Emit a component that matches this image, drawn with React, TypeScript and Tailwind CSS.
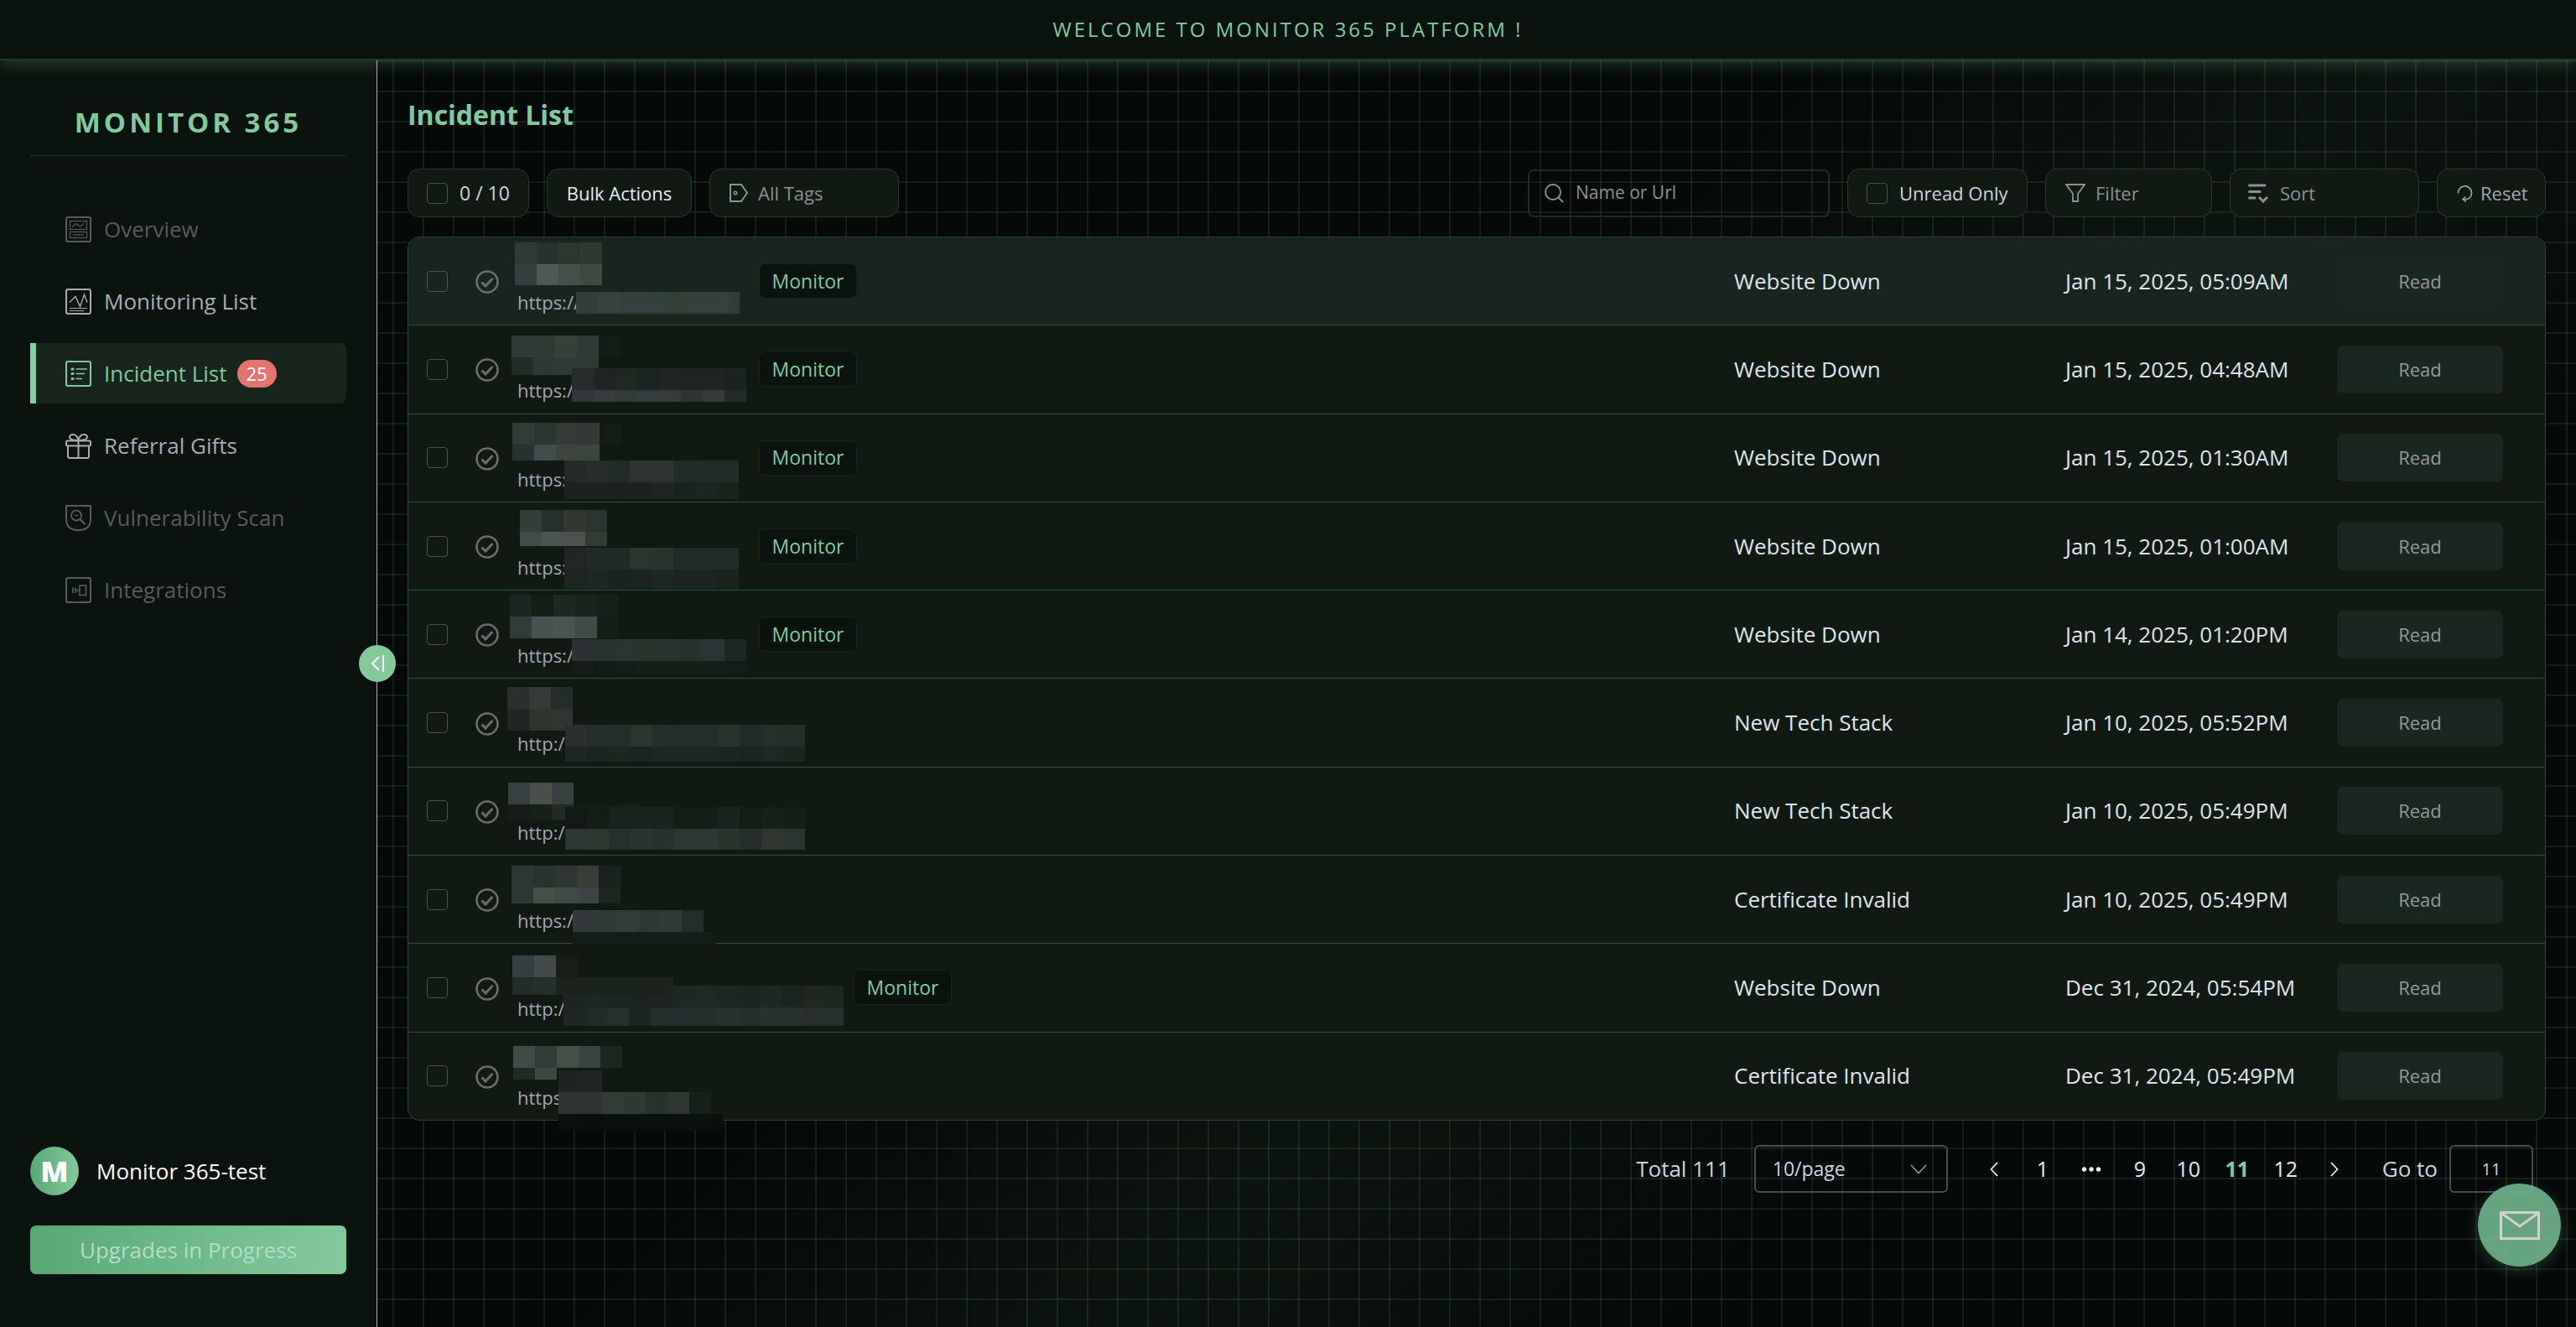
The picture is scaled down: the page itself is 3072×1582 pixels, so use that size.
import React from "react";

type Strip = { h: number; cells: string[]; w?: number };
type Mosaic = { x: number; y: number; strips: Strip[] };
type Incident = {
  url: string;
  width: number;
  tag?: string;
  status: string;
  date: string;
  mosaics: Mosaic[];
};

const incidents: Incident[] = [
  {
    url: "https://", width: 288, tag: "Monitor", status: "Website Down", date: "Jan 15, 2025, 05:09AM",
    mosaics: [
      { x: -3, y: 6, strips: [
        { h: 26, cells: ["#2e3a33", "#24332b", "#2b3830", "#2d3a32"] },
        { h: 25, cells: ["#333f41", "#4d5a54", "#444f4a", "#404840"] } ] },
      { x: 70, y: 65, strips: [
        { h: 26, w: 195, cells: ["#323e3a", "#35423e", "#33403e", "#33413e", "#343f38", "#33403b", "#33403d", "#303c35"] } ] },
    ],
  },
  {
    url: "https:/", width: 288, tag: "Monitor", status: "Website Down", date: "Jan 15, 2025, 04:48AM",
    mosaics: [
      { x: -7, y: 12, strips: [
        { h: 26, cells: ["#323a37", "#323a35", "#373f39", "#303936", "#131c15"] },
        { h: 21, cells: ["#232b29", "#303836", "#313936", "#313936"] } ] },
      { x: 65, y: 51, strips: [
        { h: 26, cells: ["#252d2a", "#1e2522", "#202824", "#1c2421", "#202723", "#1e2522", "#1e2522", "#1b2320"] },
        { h: 14, cells: ["#303939", "#353e3e", "#313b38", "#343d3c", "#343d3c", "#2c3530", "#343d3a", "#222b27"] } ] },
    ],
  },
  {
    url: "https:", width: 288, tag: "Monitor", status: "Website Down", date: "Jan 15, 2025, 01:30AM",
    mosaics: [
      { x: -6, y: 10, strips: [
        { h: 26, cells: ["#333b39", "#2c3530", "#343b36", "#323937", "#131c15"] },
        { h: 19, cells: ["#283031", "#444b4b", "#3d453f", "#3d453f"] } ] },
      { x: 56, y: 55, strips: [
        { h: 26, cells: ["#232a28", "#262d2a", "#242c29", "#2d3430", "#2c3330", "#232b28", "#242c29", "#242c29"] },
        { h: 20, cells: ["#1b2320", "#1b2320", "#1a211e", "#1b2320", "#1e2623", "#1b2320", "#1d2522", "#1a221c"] } ] },
    ],
  },
  {
    url: "https:", width: 288, tag: "Monitor", status: "Website Down", date: "Jan 15, 2025, 01:00AM",
    mosaics: [
      { x: 3, y: 9, strips: [
        { h: 26, cells: ["#353d38", "#272f2b", "#303830", "#2c342f"] },
        { h: 17, cells: ["#424b4a", "#4a534f", "#4a534f", "#323b35"] } ] },
      { x: 56, y: 54, strips: [
        { h: 26, cells: ["#202725", "#222a27", "#222a27", "#2c3430", "#2b332f", "#232b28", "#232b28", "#232b28"] },
        { h: 23, cells: ["#1e2623", "#1f2724", "#1b2320", "#1c2421", "#1f2724", "#1d2522", "#1d2522", "#1b231e"] } ] },
    ],
  },
  {
    url: "https:/", width: 288, tag: "Monitor", status: "Website Down", date: "Jan 14, 2025, 01:20PM",
    mosaics: [
      { x: -9, y: 5, strips: [
        { h: 26, cells: ["#1d2522", "#141d16", "#1e2720", "#1a221e", "#161f18"] },
        { h: 26, cells: ["#323a3a", "#495250", "#4b5450", "#424b48", "#151e17"] } ] },
      { x: 65, y: 58, strips: [
        { h: 26, cells: ["#2b3332", "#2a3230", "#2c3432", "#2b332e", "#2b332e", "#29312d", "#2b3333", "#1f2724"] },
        { h: 15, cells: ["#151c19", "#131b18", "#141c18", "#161e18", "#161e18", "#161e18", "#151d17", "#141c19"] } ] },
    ],
  },
  {
    url: "http:/", width: 288, status: "New Tech Stack", date: "Jan 10, 2025, 05:52PM",
    mosaics: [
      { x: -12, y: 10, strips: [
        { h: 26, cells: ["#29302f", "#343b37", "#252d29"] },
        { h: 26, cells: ["#1e2523", "#2c342c", "#2f3632"] } ] },
      { x: 57, y: 55, strips: [
        { h: 26, cells: ["#29312f", "#262e2b", "#252d2a", "#2d3531", "#262e2b", "#252d2a", "#252d2a", "#2a322d", "#232b28", "#272f2b", "#262e2a"] },
        { h: 18, cells: ["#1e2623", "#1c2421", "#1e2622", "#1c2421", "#1e2623", "#1e2623", "#1e2623", "#1d2522", "#1c2421", "#1f2724", "#1d2521"] } ] },
    ],
  },
  {
    url: "http:/", width: 288, status: "New Tech Stack", date: "Jan 10, 2025, 05:49PM",
    mosaics: [
      { x: -11, y: 18, strips: [
        { h: 26, cells: ["#394140", "#485049", "#394140"] },
        { h: 19, cells: ["#151d16", "#18201a", "#222a25", "#131b16", "#151d16", "#18201c"] } ] },
      { x: 57, y: 47, strips: [
        { h: 26, cells: ["#121a15", "#141c16", "#1a221e", "#1b231f", "#1b231f", "#151d17", "#151d18", "#1b231f", "#151d17", "#171f19", "#161e18"] },
        { h: 25, cells: ["#2e3634", "#2f3733", "#272f2c", "#2b332e", "#29312d", "#2f3735", "#2f3735", "#2b332f", "#262e29", "#2f3730", "#2c342f"] } ] },
    ],
  },
  {
    url: "https:/", width: 288, status: "Certificate Invalid", date: "Jan 10, 2025, 05:49PM",
    mosaics: [
      { x: -7, y: 12, strips: [
        { h: 26, cells: ["#2f3736", "#2a322e", "#2f3736", "#383d37", "#1a221f"] },
        { h: 19, cells: ["#2f3736", "#464e48", "#424a48", "#3c4444", "#1d261f"] } ] },
      { x: 66, y: 65, strips: [
        { h: 26, cells: ["#323a39", "#323a36", "#333b37", "#303835", "#323a36", "#252d29"] },
        { h: 15, w: 170, cells: ["#141d17"] } ] },
    ],
  },
  {
    url: "http:/", width: 401, tag: "Monitor", status: "Website Down", date: "Dec 31, 2024, 05:54PM",
    mosaics: [
      { x: 55, y: 50, strips: [
        { h: 26, w: 334, cells: ["#1d2522", "#1f2724", "#1d2522", "#1c2421", "#1d2522", "#1f2723", "#202823", "#1f2723", "#1d2521", "#1f2722", "#1c241f", "#1f2720", "#1e2620"] },
        { h: 22, w: 334, cells: ["#1f2724", "#222a27", "#272f2c", "#1d2522", "#252d2a", "#262e2d", "#252d2b", "#29312e", "#262e2b", "#29312e", "#29312e", "#282f2b", "#272f2b"] } ] },
      { x: -6, y: 14, strips: [
        { h: 26, cells: ["#353f3f", "#424a4a", "#191e18"] },
        { h: 21, w: 192, cells: ["#242c28", "#262e2a", "#1b231c", "#1a221d", "#1a221c", "#1a221c", "#1b231c", "#1c241e"] } ] },
    ],
  },
  {
    url: "https", width: 288, status: "Certificate Invalid", date: "Dec 31, 2024, 05:49PM",
    mosaics: [
      { x: -5, y: 16, strips: [
        { h: 26, cells: ["#424a47", "#343c3a", "#464e48", "#3a4242", "#1e2620"] },
        { h: 14, cells: ["#222a26", "#404843"] } ] },
      { x: 49, y: 45, strips: [
        { h: 26, cells: ["#1e2521", "#1f2622"] },
        { h: 26, cells: ["#2d3431", "#2e3531", "#333b37", "#303834", "#29312d", "#2f3733", "#161f1a"] },
        { h: 20, w: 196, cells: ["#0a100d", "#0a0f0c", "#09110d", "#09110d", "#09110d", "#0a100c", "#0a120e", "#0a0f0c"] } ] },
    ],
  },
];

function MosaicBlock({ x, y, strips }: Mosaic) {
  return (
    <div aria-hidden="true" className="absolute z-10" style={{ left: x, top: y }}>
      {strips.map((s, i) => (
        <div key={i} className="flex overflow-hidden" style={{ height: s.h, width: s.w ?? s.cells.length * 26 }}>
          {s.cells.map((c, j) => (
            <span key={j} className={s.cells.length === 1 ? "w-full" : "w-[26px] shrink-0"} style={{ background: c }} />
          ))}
        </div>
      ))}
    </div>
  );
}

const OverviewIcon = () => (
  <>
    <rect x="1" y="1" width="29" height="29" rx="2" strokeWidth="2" />
    <rect x="5.5" y="5.5" width="20" height="10" strokeWidth="1.2" />
    <path d="M8 12.5L12.5 8.500L17.5 12L22 8.500" strokeWidth="1.2" />
    <rect x="5.5" y="18.5" width="20" height="7" strokeWidth="1.2" />
    <path d="M9 22H22" strokeWidth="1.2" />
  </>
);
const MonitoringIcon = () => (
  <>
    <rect x="1" y="1" width="29" height="29" rx="2" strokeWidth="2" />
    <path d="M5 16.5L12 9.5L17.5 21.5L22.5 7L26 16.5" strokeWidth="1.4" />
    <path d="M5 23.5H26M5 26.5H22" strokeWidth="1.2" />
  </>
);
const IncidentIcon = () => (
  <>
    <rect x="1" y="1" width="29" height="29" rx="2" strokeWidth="2" />
    <path d="M12.5 10H26M12.5 15.5H23M12.5 21.5H20" strokeWidth="1.3" />
    <path d="M8 10H9M8 15.5H9M8 21.5H9" strokeWidth="3.2" strokeLinecap="round" />
  </>
);
const GiftIcon = () => (
  <>
    <rect x="1" y="9.5" width="29" height="6" rx="1.5" strokeWidth="2" />
    <path d="M3 15.5V28Q3 30 5 30H26Q28 30 28 28V15.5M15.5 9.5V30" strokeWidth="2" />
    <path d="M15.5 9C10 9 5 8.500 5 5C5 1 13.5 -0.5 15.5 9C17.5 -0.5 26 1 26 5C26 8.500 21 9 15.5 9Z" strokeWidth="2" />
  </>
);
const ScanIcon = () => (
  <>
    <path d="M1 1H30V17Q30 30 15.5 30Q1 30 1 17Z" strokeWidth="2" />
    <circle cx="13" cy="12.5" r="6" strokeWidth="1.8" />
    <path d="M10.5 12.5H15.5" strokeWidth="1.3" />
    <path d="M17.5 17L23.5 23" strokeWidth="2.4" />
  </>
);
const IntegrationIcon = () => (
  <>
    <rect x="1" y="1" width="29" height="29" rx="2" strokeWidth="2" />
    <path d="M9 12.5V19M12 12.5V19M12.5 15.7H17" strokeWidth="1.6" />
    <rect x="17" y="10" width="7.5" height="11.5" strokeWidth="1.6" />
  </>
);

const menu = [
  { label: "Overview", icon: OverviewIcon, tone: "text-[#585c5b]" },
  { label: "Monitoring List", icon: MonitoringIcon, tone: "text-[#a9acb0]" },
  { label: "Incident List", icon: IncidentIcon, tone: "text-[#7fc99a]", badge: 25 },
  { label: "Referral Gifts", icon: GiftIcon, tone: "text-[#a9acb0]" },
  { label: "Vulnerability Scan", icon: ScanIcon, tone: "text-[#585c5b]" },
  { label: "Integrations", icon: IntegrationIcon, tone: "text-[#585c5b]" },
];

function Sidebar() {
  return (
    <aside className="relative flex w-[450px] shrink-0 flex-col border-r border-[#7fc99a] bg-[#0b130f] px-9 pb-[63px]">
      <div className="border-b border-[#1e3327] pt-[49px] pb-[15px] text-center">
        <span className="block text-[33px] leading-[49px] font-bold tracking-[4px] text-[#82ca9c]">MONITOR 365</span>
      </div>
      <nav className="mt-[51px] flex flex-col gap-[14px]">
        {menu.map(({ label, icon: Icon, tone, badge }) => (
          <a
            key={label}
            href="#"
            aria-current={badge ? "page" : undefined}
            className={`flex h-[72px] items-center text-[26px] ${tone} ${
              badge ? "rounded-r-[7px] border-l-[7px] border-[#85cfa0] bg-[#18251d] pl-[35px]" : "pl-[42px]"
            }`}
          >
            <svg viewBox="0 0 31 31" className="mr-[15px] h-[31px] w-[31px] shrink-0" fill="none" stroke="currentColor">
              <Icon />
            </svg>
            {label}
            {badge && (
              <span className="ml-3 flex h-[33px] w-[47px] items-center justify-center rounded-full bg-[#e57470] text-[22px] text-white">
                {badge}
              </span>
            )}
          </a>
        ))}
      </nav>
      <div className="mt-auto flex items-center">
        <span className="flex h-[58px] w-[58px] items-center justify-center rounded-full bg-linear-to-r from-[#5aa876] to-[#82ca9c] text-[34px] font-extrabold text-white">
          M
        </span>
        <span className="ml-[21px] text-[26px] font-medium text-white">Monitor 365-test</span>
      </div>
      <button
        type="button"
        className="mt-9 h-[58px] rounded-[7px] bg-linear-to-r from-[#5aa876] to-[#82ca9c] text-[26px] text-[#b4dec4]"
      >
        Upgrades in Progress
      </button>
      <button
        type="button"
        aria-label="Collapse sidebar"
        className="absolute top-[697px] -right-[23px] z-20 flex h-11 w-11 items-center justify-center rounded-full bg-[#82ca9c] text-white"
      >
        <svg viewBox="0 0 20 24" className="h-6 w-5" fill="none" stroke="currentColor" strokeWidth="2">
          <path d="M12 4L4 12L12 20M17 2V22" />
        </svg>
      </button>
    </aside>
  );
}

const pill = "flex h-[58px] items-center rounded-[14px] border border-[#233b2d] bg-[#101a13]";
const box = "h-[25px] w-[25px] shrink-0 appearance-none rounded-[4px] border border-[#4c4f4e] bg-transparent";

function Toolbar() {
  return (
    <div className="mt-[40px] flex items-center gap-[21px]">
      <label className={`${pill} w-[145px] pl-[22px] text-[23px] text-[#cfd3dc]`}>
        <input type="checkbox" className={`${box} mr-[14px]`} />0 / 10
      </label>
      <button type="button" className={`${pill} w-[173px] justify-center text-[22px] font-medium text-[#e5eaf3]`}>
        Bulk Actions
      </button>
      <label className={`${pill} w-[226px] pl-[23px] text-[#8d9095]`}>
        <svg viewBox="0 0 22 22" className="mr-3 h-[22px] w-[22px] shrink-0" fill="none" stroke="currentColor" strokeWidth="2">
          <path d="M1 1H14L21 11L14 21H1Z" />
          <circle cx="7" cy="11" r="1.8" strokeWidth="1.5" />
        </svg>
        <select aria-label="Tags" className="min-w-0 flex-1 appearance-none bg-transparent text-[22px]">
          <option>All Tags</option>
        </select>
      </label>
      <label className="ml-auto flex h-[57px] w-[360px] items-center rounded-[7px] border-2 border-[#1c2f25] pl-[18px] text-[#8d9095]">
        <svg viewBox="0 0 23 23" className="mr-[14px] h-[23px] w-[23px] shrink-0" fill="none" stroke="currentColor" strokeWidth="1.8">
          <circle cx="10" cy="10" r="9" />
          <path d="M16.5 16.5L22 22" />
        </svg>
        <input
          type="text"
          aria-label="Name or Url"
          placeholder="Name or Url"
          className="min-w-0 flex-1 bg-transparent text-[21px] placeholder:text-[#8d9095]"
        />
      </label>
      <label className={`${pill} w-[215px] pl-[22px] text-[22px] font-medium text-[#cfd3dc]`}>
        <input type="checkbox" className={`${box} mr-[14px]`} />
        Unread Only
      </label>
      <label className={`${pill} w-[199px] pl-[23px] text-[#8d9095]`}>
        <svg viewBox="0 0 24 22" className="mr-3 h-[22px] w-6 shrink-0" fill="none" stroke="currentColor" strokeWidth="1.8">
          <path d="M1 1H23L15 12V21H9V12Z" />
        </svg>
        <select aria-label="Filter" className="min-w-0 flex-1 appearance-none bg-transparent text-[22px]">
          <option>Filter</option>
        </select>
      </label>
      <label className={`${pill} w-[226px] pl-[21px] text-[#8d9095]`}>
        <svg viewBox="0 0 24 24" className="mr-[14px] h-6 w-6 shrink-0" fill="none" stroke="currentColor" strokeWidth="3">
          <path d="M1.5 3H20M1.5 10.5H14M1.5 18H8" strokeLinecap="round" />
          <path d="M13 17L18 22L23 17" />
        </svg>
        <select aria-label="Sort" className="min-w-0 flex-1 appearance-none bg-transparent text-[22px]">
          <option>Sort</option>
        </select>
      </label>
      <button type="button" className={`${pill} w-[130px] pl-[23px] text-[22px] text-[#a3a6ad]`}>
        <svg viewBox="0 0 19 21" className="mr-[9px] h-[21px] w-[19px] shrink-0" fill="none" stroke="currentColor" strokeWidth="1.6">
          <path d="M1.500 10.500A8 8 0 1 1 12 17.500L7.500 17.500M10.500 14.500L7 17.500L11 20.500" />
        </svg>
        Reset
      </button>
    </div>
  );
}

function IncidentTable() {
  return (
    <div className="mt-[23px] rounded-[14px] border border-[#2b4637] bg-[#101a13]">
      <table className="h-[1052px] w-full table-fixed border-separate border-spacing-0 text-left">
        <colgroup>
          <col className="w-[72px]" />
          <col className="w-[58px]" />
          <col />
          <col className="w-[395px]" />
          <col className="w-[324px]" />
          <col className="w-[248px]" />
        </colgroup>
        <tbody>
          {incidents.map((it, i) => {
            const line = i < incidents.length - 1 ? "border-b border-[#2f503d]" : "";
            const first = i === 0;
            const tint = first ? "bg-[#18251f]" : "";
            return (
              <tr key={i}>
                <td className={`pl-[22px] align-middle ${line} ${tint} ${first ? "rounded-tl-[13px]" : ""}`}>
                  <input type="checkbox" aria-label={`Select incident ${i + 1}`} className={`${box} block`} />
                </td>
                <td className={`pl-2 align-middle ${line} ${tint}`}>
                  <svg viewBox="0 0 28 28" className="mt-[2px] block h-7 w-7" fill="none" stroke="#6c6e6d" strokeWidth="2.6">
                    <circle cx="14" cy="14" r="12.5" />
                    <path d="M7.5 14.5L12 19L20.5 10" strokeWidth="3" />
                  </svg>
                </td>
                <td className={`relative p-0 align-top ${line} ${tint}`}>
                  <div className="flex items-center">
                    <div className="flex h-[104px] items-end pb-[11px]" style={{ width: it.width }}>
                      <span className="text-[22px] leading-8 text-[#a3a6ad]">{it.url}</span>
                    </div>
                    {it.tag && (
                      <span className="flex h-[42px] w-[117px] items-center justify-center rounded-[7px] border border-[#17241d] bg-[#0b130f] text-[23px] text-[#82ca9c]">
                        {it.tag}
                      </span>
                    )}
                  </div>
                  {it.mosaics.map((m, k) => (
                    <MosaicBlock key={k} {...m} />
                  ))}
                </td>
                <td className={`p-0 align-middle text-[26px] text-[#dfe4ec] ${line} ${tint}`}>{it.status}</td>
                <td className={`p-0 align-middle text-[26px] text-[#dfe4ec] ${line} ${tint}`}>{it.date}</td>
                <td className={`p-0 align-middle ${line} ${tint} ${first ? "rounded-tr-[13px]" : ""}`}>
                  <button
                    type="button"
                    className={`block h-[57px] w-[198px] rounded-[7px] text-[22px] text-[#94999c] ${first ? "bg-[#1a2721]" : "bg-[#1a2620]"}`}
                  >
                    Read
                  </button>
                </td>
              </tr>
            );
          })}
        </tbody>
      </table>
    </div>
  );
}

function Pagination() {
  const num = "flex h-[57px] w-[58px] items-center justify-center";
  return (
    <nav aria-label="Pagination" className="mt-[29px] flex items-center justify-end pr-[15px] text-[26px] text-[#cfd3dc]">
      <span>Total 111</span>
      <div className="relative ml-[29px]">
        <select
          aria-label="Page size"
          className="h-[57px] w-[231px] appearance-none rounded-[6px] border-2 border-[#4a4d4e] bg-transparent pl-5 text-[23px]"
        >
          <option>10/page</option>
        </select>
        <svg viewBox="0 0 20 12" className="pointer-events-none absolute top-[23px] right-[25px] h-3 w-5" fill="none" stroke="#8d9095" strokeWidth="1.6">
          <path d="M1 1L10 10.5L19 1" />
        </svg>
      </div>
      <div className="ml-[26px] flex items-center text-[25px] text-[#e5eaf3]">
        <button type="button" aria-label="Previous page" className={num}>
          <svg viewBox="0 0 10 18" className="h-[18px] w-[10px]" fill="none" stroke="currentColor" strokeWidth="1.8">
            <path d="M9 1L1.5 9L9 17" />
          </svg>
        </button>
        <button type="button" className={num}>1</button>
        <button type="button" aria-label="More pages" className={num}>
          <svg viewBox="0 0 24 6" className="h-[6px] w-6" fill="currentColor">
            <circle cx="3.5" cy="3" r="2.7" />
            <circle cx="12" cy="3" r="2.7" />
            <circle cx="20.5" cy="3" r="2.7" />
          </svg>
        </button>
        <button type="button" className={num}>9</button>
        <button type="button" className={num}>10</button>
        <button type="button" aria-current="page" className={`${num} font-bold text-[#82ca9c]`}>11</button>
        <button type="button" className={num}>12</button>
        <button type="button" aria-label="Next page" className={num}>
          <svg viewBox="0 0 10 18" className="h-[18px] w-[10px]" fill="none" stroke="currentColor" strokeWidth="1.8">
            <path d="M1 1L8.500 9L1 17" />
          </svg>
        </button>
      </div>
      <label className="ml-7 flex items-center">
        Go to
        <input
          type="text"
          defaultValue="11"
          className="ml-[14px] h-[57px] w-[100px] rounded-[6px] border-2 border-[#4a4d4e] bg-transparent text-center text-[20px]"
        />
      </label>
    </nav>
  );
}

export default function App() {
  return (
    <div className="flex min-h-screen flex-col bg-[linear-gradient(to_right,#82ca9c1c_2px,transparent_2px),linear-gradient(to_bottom,#82ca9c1c_2px,transparent_2px),linear-gradient(135deg,#050908_48%,#0c1410_63%,#050908_77%)] bg-[size:36px_36px,36px_36px,100%_100%] font-['Open_Sans','Noto_Sans',sans-serif]">
      <header className="relative z-30 flex h-[72px] shrink-0 items-center justify-center border-b-2 border-[#22382c] bg-[#0b130f] shadow-[0_4px_18px_#82ca9c40]">
        <p className="text-[24px] tracking-[3px] text-[#82ca9c]">WELCOME TO MONITOR 365 PLATFORM !</p>
      </header>
      <div className="flex flex-1">
        <Sidebar />
        <main className="min-w-0 flex-1 pt-[40px] pr-9 pl-9">
          <h1 className="text-[32px] leading-[49px] font-bold text-[#82ca9c]">Incident List</h1>
          <Toolbar />
          <IncidentTable />
          <Pagination />
        </main>
      </div>
      <button
        type="button"
        aria-label="Contact us"
        className="fixed right-[18px] bottom-[72px] z-40 flex h-[99px] w-[99px] items-center justify-center rounded-full bg-[#71b58d]/90 shadow-[0_4px_18px_#82ca9c40]"
      >
        <svg viewBox="0 0 48 34" className="h-[34px] w-12" fill="none" stroke="#cfd3d0" strokeWidth="3">
          <path d="M1.5 1.5H46.5V32.5H1.5ZM2.5 2.5L24 18L45.5 2.5" />
        </svg>
      </button>
    </div>
  );
}
